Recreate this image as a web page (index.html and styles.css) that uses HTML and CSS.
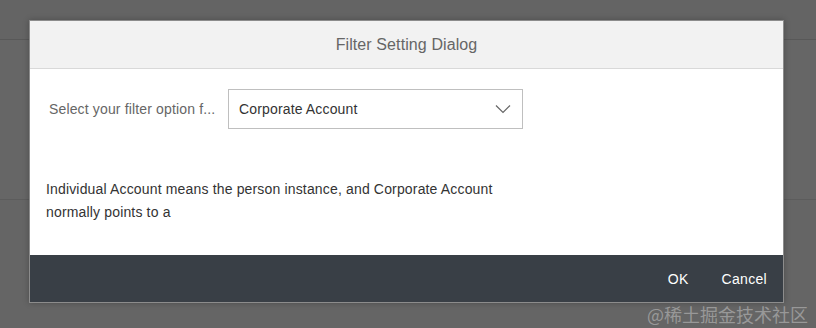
FILE: index.html
```html
<!DOCTYPE html>
<html>
<head>
<meta charset="utf-8">
<link rel="stylesheet" href="styles.css">
</head>
<body>
<div class="backdrop">
  <div class="bg-bar"></div>
  <div class="bg-block"></div>
</div>
<div class="dialog">
  <div class="dialog-header">Filter Setting Dialog</div>
  <div class="dialog-body">
    <div class="filter-row">
      <span class="filter-label">Select your filter option f...</span>
      <div class="select">
        <span class="select-value">Corporate Account</span>
        <svg class="chevron" width="16" height="10" viewBox="0 0 16 10"><path d="M1 1.5 L8 8.5 L15 1.5" fill="none" stroke="#666" stroke-width="1.2"/></svg>
      </div>
    </div>
    <p class="desc">Individual Account means the person instance, and Corporate Account normally points to a</p>
  </div>
  <div class="dialog-footer">
    <button class="btn">OK</button>
    <button class="btn">Cancel</button>
  </div>
</div>
<div class="watermark">@稀土掘金技术社区</div>
</body>
</html>
```
FILE: styles.css
```css
html, body {
  margin: 0;
  padding: 0;
  width: 816px;
  height: 328px;
  overflow: hidden;
  background: #656565;
  font-family: "Liberation Sans", Arial, sans-serif;
}
.backdrop {
  display: flex;
  flex-direction: column;
}
.bg-bar {
  height: 39px;
  border-bottom: 1px solid #585858;
  background: #646464;
}
.bg-block {
  height: 159px;
  border-bottom: 1px solid #5c5c5c;
  background: #666666;
}
.dialog {
  position: absolute;
  left: 29px;
  top: 20px;
  width: 753px;
  height: 281px;
  border: 1px solid #8c8c8c;
  background: #fff;
  display: flex;
  flex-direction: column;
  box-shadow: 0 0 6px rgba(0,0,0,0.25);
}
.dialog-header {
  height: 47px;
  background: #f2f2f2;
  border-bottom: 1px solid #d9d9d9;
  display: flex;
  align-items: center;
  justify-content: center;
  color: #666;
  font-size: 16px;
  letter-spacing: 0.1px;
}
.dialog-body {
  flex: 1;
  display: flex;
  flex-direction: column;
  padding: 20px 0 0 0;
}
.filter-row {
  display: flex;
  align-items: center;
  padding-left: 19px;
}
.filter-label {
  color: #666;
  font-size: 14px;
  letter-spacing: 0.15px;
  width: 179px;
}
.select {
  box-sizing: border-box;
  width: 295px;
  height: 40px;
  border: 1px solid #bfbfbf;
  display: flex;
  align-items: center;
  justify-content: space-between;
  padding: 0 11px 0 10px;
}
.select-value {
  color: #333;
  font-size: 14px;
  letter-spacing: 0.15px;
}
.chevron {
  display: block;
}
.desc {
  margin: 49px 0 0 0;
  padding-left: 16px;
  width: 480px;
  color: #333;
  font-size: 14px;
  letter-spacing: 0.16px;
  line-height: 23px;
}
.dialog-footer {
  height: 47px;
  background: #393f46;
  display: flex;
  justify-content: flex-end;
  align-items: center;
  padding-right: 16px;
  gap: 33px;
}
.btn {
  background: none;
  border: none;
  color: #fff;
  font-family: "Liberation Sans", Arial, sans-serif;
  font-size: 14px;
  letter-spacing: 0.3px;
  padding: 0;
  height: 36px;
  cursor: pointer;
}
.watermark {
  position: absolute;
  right: 8px;
  top: 301px;
  color: rgba(170,170,170,0.75);
  font-size: 18px;
  font-family: "Noto Sans CJK SC", sans-serif;
}
```
